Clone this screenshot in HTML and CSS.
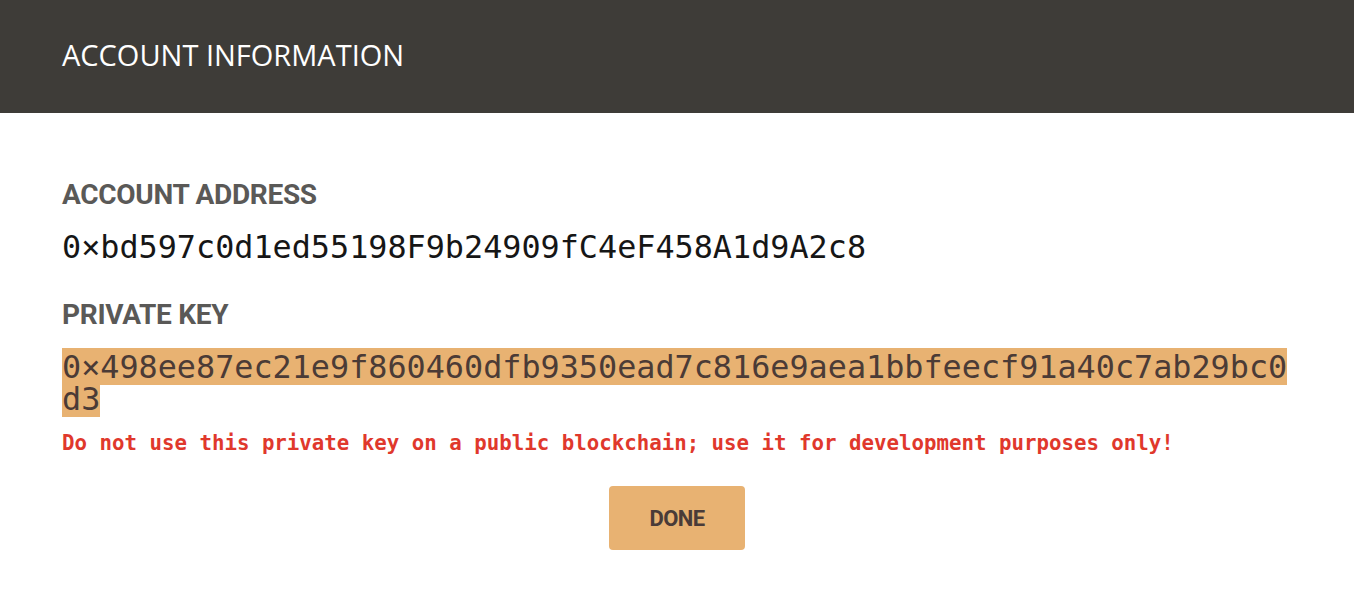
FILE: index.html
```html
<!DOCTYPE html>
<html lang="en">
<head>
<meta charset="utf-8">
<title>Account Information</title>
<link rel="stylesheet" href="styles.css">
</head>
<body>
<div class="modal">
  <header class="modal-header">
    <h1 class="modal-title">ACCOUNT INFORMATION</h1>
  </header>
  <section class="modal-body">
    <h2 class="label label-address">ACCOUNT ADDRESS</h2>
    <p class="address">0×bd597c0d1ed55198F9b24909fC4eF458A1d9A2c8</p>
    <h2 class="label label-key">PRIVATE KEY</h2>
    <p class="key"><span class="key-text">0×498ee87ec21e9f860460dfb9350ead7c816e9aea1bbfeecf91a40c7ab29bc0d3</span></p>
    <p class="warning">Do not use this private key on a public blockchain; use it for development purposes only!</p>
    <div class="actions">
      <button class="btn-done" type="button">DONE</button>
    </div>
  </section>
</div>
</body>
</html>
```

FILE: styles.css
```css
html, body {
  margin: 0;
  padding: 0;
  background: #ffffff;
}

.modal {
  width: 1354px;
  height: 608px;
  background: #ffffff;
}

.modal-header {
  height: 113px;
  background: #3e3c38;
  display: flex;
  align-items: center;
  padding: 0 62px 4px;
  box-sizing: border-box;
}

.modal-title {
  margin: 0;
  font-family: "Open Sans", "Noto Sans", sans-serif;
  font-weight: 400;
  font-size: 29px;
  line-height: 1;
  color: #ffffff;
}

.modal-body {
  padding: 0 62px;
  display: flex;
  flex-direction: column;
}

.label {
  margin: 0;
  font-family: Roboto, "Liberation Sans", sans-serif;
  font-weight: 700;
  font-size: 28px;
  line-height: 28px;
  color: #5a5957;
  letter-spacing: -0.3px;
}

.label-address {
  margin-top: 68px;
}

.label-key {
  margin-top: 38px;
}

.address {
  margin: 22px 0 0;
  font-family: "DejaVu Sans Mono", "Liberation Mono", monospace;
  font-size: 31.8px;
  line-height: 32px;
  color: #161616;
}

.key {
  margin: 22px -8px 0 0;
  font-family: "DejaVu Sans Mono", "Liberation Mono", monospace;
  font-size: 31.8px;
  line-height: 32px;
  color: #4b3b36;
  word-break: break-all;
}

.key-text {
  background: #e8b272;
}

.warning {
  margin: 18px 0 0;
  font-family: "DejaVu Sans Mono", "Liberation Mono", monospace;
  font-weight: 700;
  font-size: 20.75px;
  line-height: 21px;
  color: #e0382c;
}

.actions {
  display: flex;
  justify-content: center;
  margin-top: 32px;
}

.btn-done {
  width: 136px;
  height: 64px;
  border: none;
  border-radius: 4px;
  background: #e8b272;
  color: #4a3b38;
  font-family: Roboto, "Liberation Sans", sans-serif;
  font-weight: 700;
  font-size: 22px;
  letter-spacing: -0.6px;
  padding: 0;
  cursor: pointer;
}
```
